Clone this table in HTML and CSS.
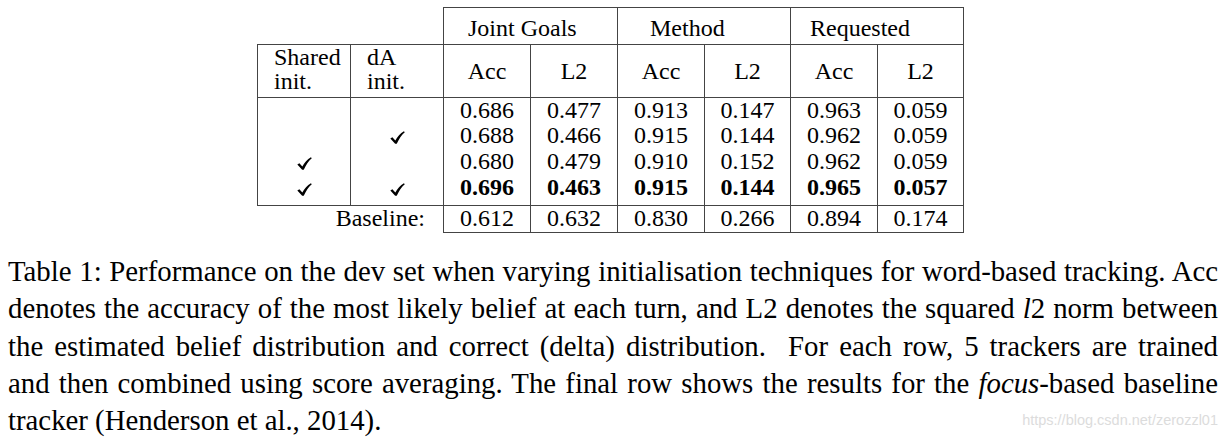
FILE: index.html
```html
<!DOCTYPE html>
<html lang="en">
<head>
<meta charset="utf-8">
<title>Table 1</title>
<link rel="stylesheet" href="styles.css">
</head>
<body>
<main class="page">
  <div class="table-wrap">
    <table class="results">
      <colgroup>
        <col class="w93"><col class="w93">
        <col class="w87"><col class="w87">
        <col class="w87"><col class="w86">
        <col class="w87"><col class="w86">
      </colgroup>
      <tr class="group-row">
        <td class="blank" colspan="2"></td>
        <th class="grp g-joint" colspan="2">Joint Goals</th>
        <th class="grp g-method" colspan="2">Method</th>
        <th class="grp g-req" colspan="2">Requested</th>
      </tr>
      <tr class="head-row">
        <th class="lbl">Shared<br>init.</th>
        <th class="lbl">dA<br>init.</th>
        <th class="metric">Acc</th><th class="metric">L2</th>
        <th class="metric">Acc</th><th class="metric">L2</th>
        <th class="metric">Acc</th><th class="metric">L2</th>
      </tr>
      <tr class="data r1">
        <td></td><td></td>
        <td>0.686</td><td>0.477</td><td>0.913</td><td>0.147</td><td>0.963</td><td>0.059</td>
      </tr>
      <tr class="data r2">
        <td></td><td><svg class="check" viewBox="0 0 14 12" width="15" height="13"><path d="M0.3 7.0 L2.2 5.8 L5.0 8.7 C6.9 5.2 9.6 2.3 13.0 0.2 L13.8 1.0 C10.7 3.7 8.3 7.2 6.3 11.9 L4.8 11.9 Z"/></svg></td>
        <td>0.688</td><td>0.466</td><td>0.915</td><td>0.144</td><td>0.962</td><td>0.059</td>
      </tr>
      <tr class="data r3">
        <td><svg class="check" viewBox="0 0 14 12" width="15" height="13"><path d="M0.3 7.0 L2.2 5.8 L5.0 8.7 C6.9 5.2 9.6 2.3 13.0 0.2 L13.8 1.0 C10.7 3.7 8.3 7.2 6.3 11.9 L4.8 11.9 Z"/></svg></td><td></td>
        <td>0.680</td><td>0.479</td><td>0.910</td><td>0.152</td><td>0.962</td><td>0.059</td>
      </tr>
      <tr class="data r4">
        <td><svg class="check" viewBox="0 0 14 12" width="15" height="13"><path d="M0.3 7.0 L2.2 5.8 L5.0 8.7 C6.9 5.2 9.6 2.3 13.0 0.2 L13.8 1.0 C10.7 3.7 8.3 7.2 6.3 11.9 L4.8 11.9 Z"/></svg></td><td><svg class="check" viewBox="0 0 14 12" width="15" height="13"><path d="M0.3 7.0 L2.2 5.8 L5.0 8.7 C6.9 5.2 9.6 2.3 13.0 0.2 L13.8 1.0 C10.7 3.7 8.3 7.2 6.3 11.9 L4.8 11.9 Z"/></svg></td>
        <td class="best">0.696</td><td class="best">0.463</td><td class="best">0.915</td><td class="best">0.144</td><td class="best">0.965</td><td class="best">0.057</td>
      </tr>
      <tr class="base-row">
        <td class="base-label" colspan="2">Baseline:</td>
        <td>0.612</td><td>0.632</td><td>0.830</td><td>0.266</td><td>0.894</td><td>0.174</td>
      </tr>
    </table>
  </div>

  <div class="caption">
    <p class="line">Table 1: Performance on the dev set when varying initialisation techniques for word-based tracking. Acc</p>
    <p class="line">denotes the accuracy of the most likely belief at each turn, and L2 denotes the squared <i>l</i>2 norm between</p>
    <p class="line">the estimated belief distribution and correct (delta) distribution.&nbsp; For each row, 5 trackers are trained</p>
    <p class="line">and then combined using score averaging. The final row shows the results for the <i>focus</i>-based baseline</p>
    <p class="line last">tracker (Henderson et al., 2014).</p>
  </div>

  <div class="watermark">https://blog.csdn.net/zerozzl01</div>
</main>
</body>
</html>
```

FILE: styles.css
```css
html, body {
  margin: 0;
  padding: 0;
  background: #ffffff;
}

body {
  font-family: "Liberation Serif", "Times New Roman", Tinos, "DejaVu Serif", serif;
  color: #000000;
}

.page {
  position: relative;
  width: 1222px;
  height: 437px;
  padding-top: 7px;
  box-sizing: border-box;
  overflow: hidden;
}

.table-wrap {
  padding-left: 257px;
}

.results {
  border-collapse: collapse;
  table-layout: fixed;
  width: 707px;
  font-family: "Liberation Serif", "Times New Roman", Tinos, "DejaVu Serif", serif;
  font-size: 24px;
}

.w93 { width: 93px; }
.w87 { width: 87px; }
.w86 { width: 86px; }

.results th,
.results td {
  padding: 0;
  font-weight: 400;
  text-align: center;
  border: 1px solid #444444;
}

/* group header row */
.group-row .blank {
  border-top: none;
  border-left: none;
}
.group-row th {
  height: 36px;
  line-height: 32px;
  padding-top: 4px;
  box-sizing: border-box;
  text-align: left;
  vertical-align: top;
}
.results .g-joint { padding-left: 24px; }
.results .g-method { padding-left: 32px; }
.results .g-req { padding-left: 19px; }

/* metric header row */
.head-row th {
  height: 53px;
  box-sizing: border-box;
}
.results .head-row .lbl {
  text-align: left;
  vertical-align: top;
  padding-left: 16px;
  padding-top: 0;
  line-height: 24px;
}
.head-row .metric {
  vertical-align: middle;
  line-height: 24px;
}

/* data rows */
.data td {
  border-top: none;
  border-bottom: none;
  line-height: 26px;
  height: 26px;
  vertical-align: top;
}
.data.r1 td {
  line-height: 24px;
  height: 24px;
}
.results .data.r4 td {
  border-bottom: 1px solid #444444;
  padding-bottom: 5px;
}
.results td.best {
  font-weight: 700;
}

.check {
  display: inline-block;
  vertical-align: -1px;
  fill: #000000;
}

/* baseline row */
.base-row td {
  line-height: 24px;
  height: 26px;
  vertical-align: top;
}
.results .base-row .base-label {
  text-align: right;
  padding-right: 18px;
  border-left: none;
  border-bottom: none;
}

/* caption */
.caption {
  margin-top: 20px;
  padding-left: 8px;
  width: 1210px;
  font-family: "Liberation Serif", "Times New Roman", Tinos, "DejaVu Serif", serif;
  font-size: 28.8px;
  line-height: 37.3px;
}
.caption .line {
  margin: 0;
  text-align: justify;
  text-align-last: justify;
  white-space: nowrap;
}
.caption .line.last {
  text-align-last: left;
}

.watermark {
  position: absolute;
  right: 4px;
  bottom: 9px;
  font-family: "Liberation Sans", Arial, sans-serif;
  font-size: 14.5px;
  color: #dcdcdc;
}
```
